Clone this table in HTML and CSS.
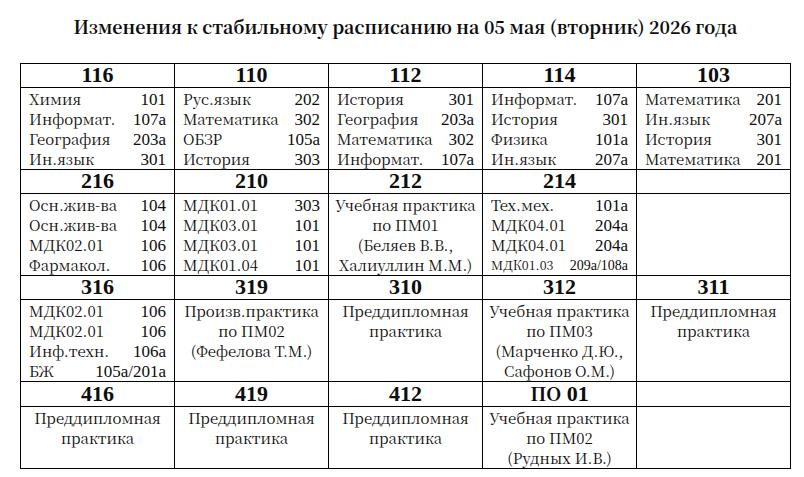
FILE: index.html
```html
<!DOCTYPE html>
<html>
<head>
<meta charset="utf-8">
<title>Изменения к стабильному расписанию</title>
<link rel="stylesheet" href="styles.css">
</head>
<body>
<div class="page">
  <h1 class="title">Изменения к стабильному расписанию на 05 мая (вторник) 2026 года</h1>
  <table class="sched">
    <colgroup><col><col><col><col><col></colgroup>
    <tr class="hrow">
      <th>116</th><th>110</th><th>112</th><th>114</th><th>103</th>
    </tr>
    <tr class="brow">
      <td><div class="ln"><span>Химия</span><span class="n">101</span></div><div class="ln"><span>Информат.</span><span class="n">107а</span></div><div class="ln"><span>География</span><span class="n">203а</span></div><div class="ln"><span>Ин.язык</span><span class="n">301</span></div></td>
      <td><div class="ln"><span>Рус.язык</span><span class="n">202</span></div><div class="ln"><span>Математика</span><span class="n">302</span></div><div class="ln"><span>ОБЗР</span><span class="n">105а</span></div><div class="ln"><span>История</span><span class="n">303</span></div></td>
      <td><div class="ln"><span>История</span><span class="n">301</span></div><div class="ln"><span>География</span><span class="n">203а</span></div><div class="ln"><span>Математика</span><span class="n">302</span></div><div class="ln"><span>Информат.</span><span class="n">107а</span></div></td>
      <td><div class="ln"><span>Информат.</span><span class="n">107а</span></div><div class="ln"><span>История</span><span class="n">301</span></div><div class="ln"><span>Физика</span><span class="n">101а</span></div><div class="ln"><span>Ин.язык</span><span class="n">207а</span></div></td>
      <td><div class="ln"><span>Математика</span><span class="n">201</span></div><div class="ln"><span>Ин.язык</span><span class="n">207а</span></div><div class="ln"><span>История</span><span class="n">301</span></div><div class="ln"><span>Математика</span><span class="n">201</span></div></td>
    </tr>
    <tr class="hrow">
      <th>216</th><th>210</th><th>212</th><th>214</th><th></th>
    </tr>
    <tr class="brow">
      <td><div class="ln"><span>Осн.жив-ва</span><span class="n">104</span></div><div class="ln"><span>Осн.жив-ва</span><span class="n">104</span></div><div class="ln"><span>МДК02.01</span><span class="n">106</span></div><div class="ln"><span>Фармакол.</span><span class="n">106</span></div></td>
      <td><div class="ln"><span>МДК01.01</span><span class="n">303</span></div><div class="ln"><span>МДК03.01</span><span class="n">101</span></div><div class="ln"><span>МДК03.01</span><span class="n">101</span></div><div class="ln"><span>МДК01.04</span><span class="n">101</span></div></td>
      <td class="ctr">Учебная практика<br>по ПМ01<br>(Беляев В.В.,<br>Халиуллин М.М.)</td>
      <td><div class="ln"><span>Тех.мех.</span><span class="n">101а</span></div><div class="ln"><span>МДК04.01</span><span class="n">204а</span></div><div class="ln"><span>МДК04.01</span><span class="n">204а</span></div><div class="ln small"><span>МДК01.03</span><span class="n">209а/108а</span></div></td>
      <td></td>
    </tr>
    <tr class="hrow">
      <th>316</th><th>319</th><th>310</th><th>312</th><th>311</th>
    </tr>
    <tr class="brow tall">
      <td><div class="ln"><span>МДК02.01</span><span class="n">106</span></div><div class="ln"><span>МДК02.01</span><span class="n">106</span></div><div class="ln"><span>Инф.техн.</span><span class="n">106а</span></div><div class="ln"><span>БЖ</span><span class="n">105а/201а</span></div></td>
      <td class="ctr">Произв.практика<br>по ПМ02<br>(Фефелова Т.М.)</td>
      <td class="ctr">Преддипломная<br>практика</td>
      <td class="ctr">Учебная практика<br>по ПМ03<br>(Марченко Д.Ю.,<br>Сафонов О.М.)</td>
      <td class="ctr">Преддипломная<br>практика</td>
    </tr>
    <tr class="hrow">
      <th>416</th><th>419</th><th>412</th><th><span class="cy">ПО</span> 01</th><th></th>
    </tr>
    <tr class="brow last">
      <td class="ctr">Преддипломная<br>практика</td>
      <td class="ctr">Преддипломная<br>практика</td>
      <td class="ctr">Преддипломная<br>практика</td>
      <td class="ctr">Учебная практика<br>по ПМ02<br>(Рудных И.В.)</td>
      <td></td>
    </tr>
  </table>
</div>
</body>
</html>
```

FILE: styles.css
```css
html, body {
  margin: 0;
  padding: 0;
  background: #ffffff;
}

body {
  font-family: "Noto Serif CJK SC", "Liberation Serif", serif;
  color: #0d0d0d;
}

.page {
  width: 771px;
  margin-left: 20px;
  padding-top: 16px;
}

.title {
  margin: 0 0 25px 0;
  font-size: 17.8px;
  line-height: 22px;
  font-weight: bold;
  text-align: center;
  white-space: nowrap;
}

.sched {
  width: 771px;
  border-collapse: collapse;
  table-layout: fixed;
}

.sched col {
  width: 154px;
}

.sched th,
.sched td {
  border: 1px solid #000000;
  padding: 0;
}

.hrow th {
  height: 23px;
  box-sizing: border-box;
  font-family: "Liberation Serif", "Noto Serif CJK SC", serif;
  font-size: 22px;
  line-height: 21px;
  padding-bottom: 2px;
  font-weight: bold;
  text-align: center;
  vertical-align: middle;
}

.hrow th .cy {
  font-family: "Noto Serif CJK SC", serif;
  font-size: 19px;
}

.brow td {
  height: 81px;
  font-size: 15px;
  line-height: 20px;
  vertical-align: top;
  padding: 1px 8px 0 8px;
  box-sizing: border-box;
}

.brow.tall td {
  height: 82px;
}

.brow.last td {
  height: 61px;
}

.ln {
  display: flex;
  justify-content: space-between;
  align-items: baseline;
  height: 20px;
  white-space: nowrap;
}

.ln .n {
  font-family: "Liberation Serif", "Noto Serif CJK SC", serif;
  font-size: 17px;
}

.ln.small {
  font-size: 12.5px;
}

.ln.small .n {
  font-size: 14px;
}

.brow td.ctr {
  text-align: center;
  padding-left: 2px;
  padding-right: 2px;
  white-space: nowrap;
}
```
